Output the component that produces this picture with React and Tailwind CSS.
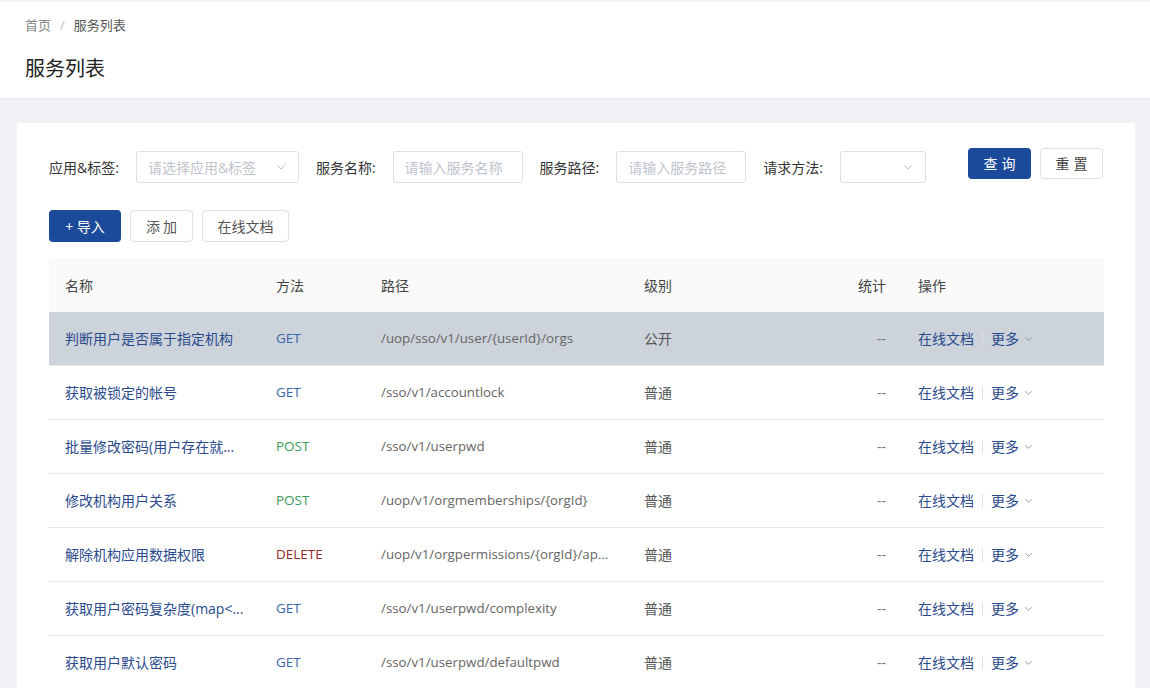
import React from 'react';

const rows = [
  { name: '判断用户是否属于指定机构', method: 'GET', path: '/uop/sso/v1/user/{userId}/orgs', level: '公开', active: true },
  { name: '获取被锁定的帐号', method: 'GET', path: '/sso/v1/accountlock', level: '普通' },
  { name: '批量修改密码(用户存在就...', method: 'POST', path: '/sso/v1/userpwd', level: '普通' },
  { name: '修改机构用户关系', method: 'POST', path: '/uop/v1/orgmemberships/{orgId}', level: '普通' },
  { name: '解除机构应用数据权限', method: 'DELETE', path: '/uop/v1/orgpermissions/{orgId}/ap...', level: '普通' },
  { name: '获取用户密码复杂度(map<...', method: 'GET', path: '/sso/v1/userpwd/complexity', level: '普通' },
  { name: '获取用户默认密码', method: 'GET', path: '/sso/v1/userpwd/defaultpwd', level: '普通' },
];

const methodColor = {
  GET: 'text-[#3a68a6]',
  POST: 'text-[#3c9a58]',
  DELETE: 'text-[#8e2b2b]',
};

function Chevron({ className }) {
  return (
    <svg className={className} viewBox="0 0 12 12" fill="none" stroke="currentColor" strokeWidth="1">
      <path d="M2.5 4.5L6 8l3.5-3.5" />
    </svg>
  );
}

function Field({ label, placeholder, width, select }) {
  return (
    <div className="flex items-center">
      <span className="text-[14px] text-[#333]">{label}</span>
      <div
        className={`ml-[17px] h-[32px] flex items-center justify-between border border-[#dcdfe6] rounded-[3px] px-[11px] ${width}`}
      >
        <span className="text-[14px] text-[#c0c4cc]">{placeholder}</span>
        {select && <Chevron className="w-[12px] h-[12px] text-[#c0c4cc]" />}
      </div>
    </div>
  );
}

export default function App() {
  return (
    <div
      className="w-[1150px] h-[688px] overflow-hidden bg-[#f0f2f5]"
      style={{ fontFamily: '"Open Sans", "Noto Sans CJK SC", sans-serif' }}
    >
      <div className="bg-white border-b border-[#e4e7ed] pt-[14px] px-[25px] h-[99px] border-t-[2px] border-t-[#f5f5f5]">
        <div className="flex items-center text-[13px] text-[#666] leading-[18px]">
          <span className="text-[#888]">首页</span>
          <span className="mx-[9px] text-[#bbb]">/</span>
          <span className="text-[#555]">服务列表</span>
        </div>
        <div className="mt-[21px] text-[20px] text-[#222] leading-[28px]">服务列表</div>
      </div>

      <div className="ml-[17px] mt-[24px] mr-[15px] bg-white pt-[24px] pl-[32px] pr-[32px] pb-[20px] h-[600px]">
        <div className="flex items-center justify-between">
          <div className="flex items-center gap-[17px] mt-[4px]">
            <Field label="应用&标签:" placeholder="请选择应用&标签" width="w-[163px]" select />
            <Field label="服务名称:" placeholder="请输入服务名称" width="w-[130px]" />
            <Field label="服务路径:" placeholder="请输入服务路径" width="w-[130px]" />
            <Field label="请求方法:" placeholder="" width="w-[86px] justify-end" select />
          </div>
          <div className="flex items-center gap-[9px] -mt-[4px]">
            <button className="w-[63px] h-[31px] rounded-[4px] bg-[#1b4a9a] text-white text-[14px] tracking-[4px] pl-[4px]">
              查询
            </button>
            <button className="w-[63px] h-[31px] rounded-[4px] border border-[#dcdfe6] bg-white text-[#444] text-[14px] tracking-[4px] pl-[4px]">
              重置
            </button>
          </div>
        </div>

        <div className="flex items-center gap-[9px] mt-[27px]">
          <button className="w-[72px] h-[32px] rounded-[4px] bg-[#1b4a9a] text-white text-[14px]">+ 导入</button>
          <button className="w-[63px] h-[32px] rounded-[4px] border border-[#dcdfe6] bg-white text-[#555] text-[14px] tracking-[3px] pl-[3px]">
            添加
          </button>
          <button className="w-[87px] h-[32px] rounded-[4px] border border-[#dcdfe6] bg-white text-[#555] text-[14px]">
            在线文档
          </button>
        </div>

        <div className="mt-[16px] w-[1055px] text-[14px]">
          <div className="flex items-center h-[54px] bg-[#fafafa] text-[#444]">
            <div className="w-[227px] pl-[16px]">名称</div>
            <div className="w-[105px]">方法</div>
            <div className="w-[263px]">路径</div>
            <div className="w-[204px]">级别</div>
            <div className="w-[38px] text-right">统计</div>
            <div className="pl-[32px]">操作</div>
          </div>
          {rows.map((r, i) => (
            <div
              key={i}
              className={`flex items-center h-[54px] border-b border-[#e8e8e8] ${r.active ? 'bg-[#ccd3db]' : 'bg-white'}`}
            >
              <div className="w-[227px] pl-[16px] text-[#2a4a8c] whitespace-nowrap">{r.name}</div>
              <div className={`w-[105px] text-[13.5px] ${methodColor[r.method]}`}>{r.method}</div>
              <div className="w-[263px] text-[13.3px] text-[#666] whitespace-nowrap">{r.path}</div>
              <div className="w-[204px] text-[#555]">{r.level}</div>
              <div className="w-[38px] text-right text-[#777]">--</div>
              <div className="pl-[32px] flex items-center text-[#2a4a8c]">
                <span>在线文档</span>
                <span className="mx-[8px] w-px h-[14px] bg-[#e0e0e0]" />
                <span>更多</span>
                <Chevron className="ml-[4px] w-[11px] h-[11px] text-[#8a95a8]" />
              </div>
            </div>
          ))}
        </div>
      </div>
    </div>
  );
}
